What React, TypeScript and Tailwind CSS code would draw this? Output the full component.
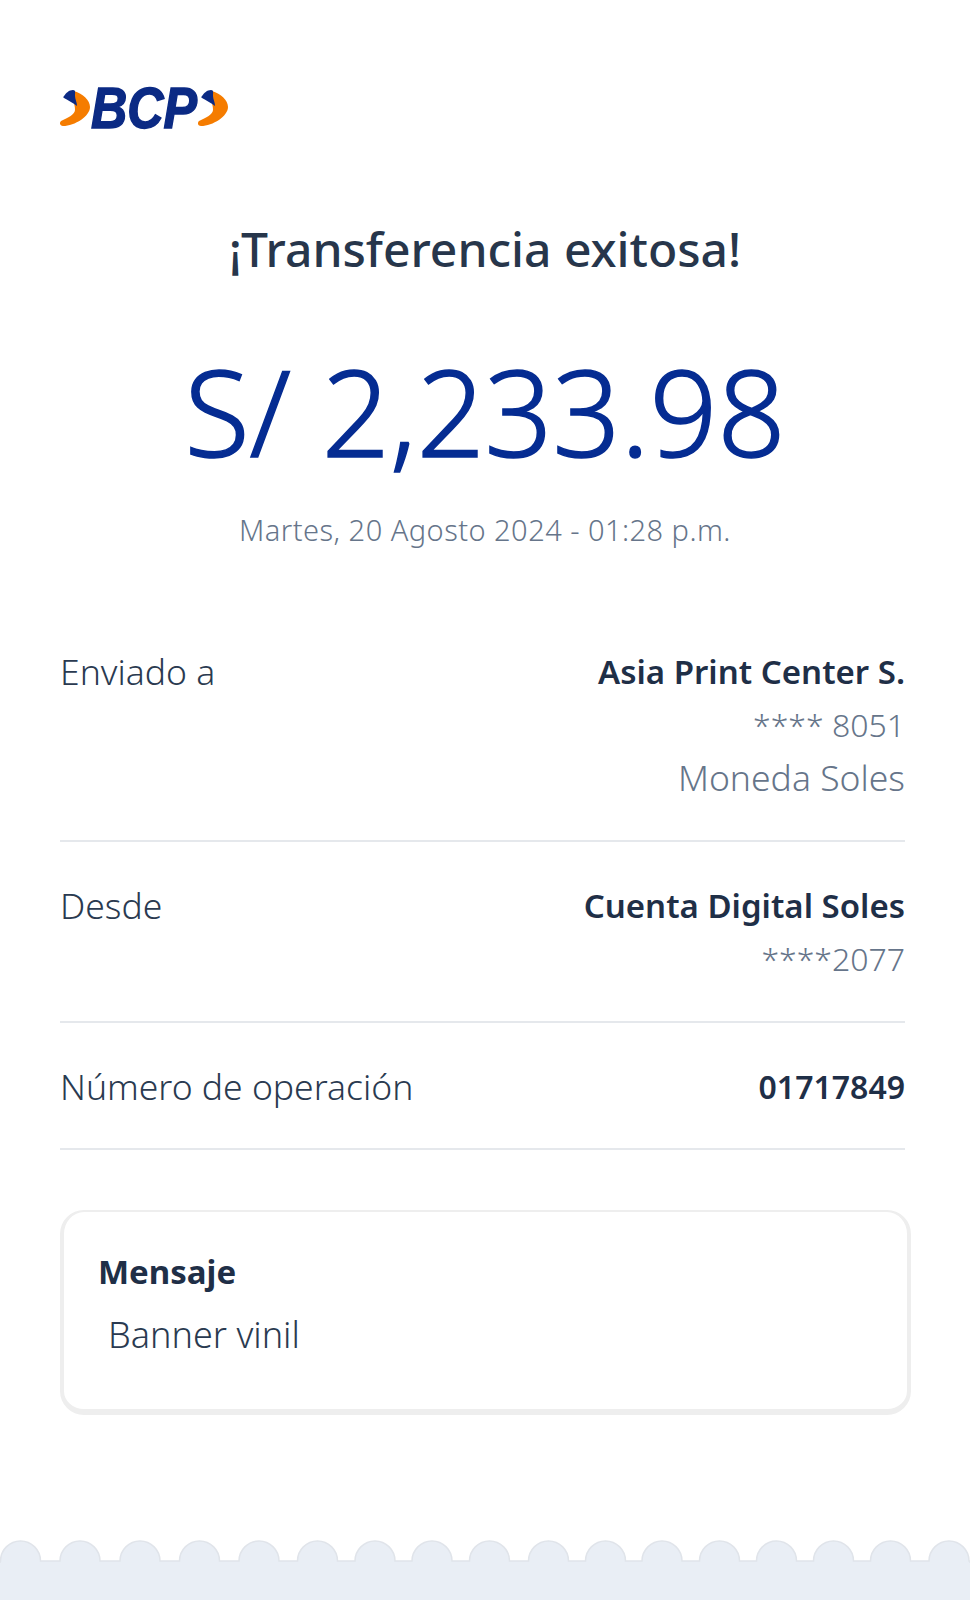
const scallops = [20.5, 80, 140, 199.5, 259, 317.5, 375, 432, 489.5, 548.5, 605.5, 662, 719.5, 776.5, 833.5, 890.5, 949];

function Chevron({ x }: { x: number }) {
  return (
    <g transform={`translate(${x} 0)`}>
      <path d="M14 6 C23 9 30 15 30 22 C30 31 15 41 3 41 C0 41 -1 38 1 36 C8 33 15 29 15 25 C15 21 14 18 13 15 Z" fill="#f57c00" />
      <path d="M4 11 C6 8 9 5 13 5 C16 5 15 8 15 11 C15 14 17 17 17 21 C13 18 8 15 4 13 C3 12.500 3 12 4 11 Z" fill="#0b2a84" />
    </g>
  );
}

function BcpLogo() {
  return (
    <svg width="172" height="70" viewBox="0 -10 172 70" className="block">
      <Chevron x={0} />
      <text x="31" y="43" fontFamily="'Liberation Sans', sans-serif" fontWeight="700" fontStyle="italic" fontSize="57" fill="#0b2a84" stroke="#0b2a84" strokeWidth="1.5" textLength="106" lengthAdjust="spacingAndGlyphs">BCP</text>
      <Chevron x={138} />
    </svg>
  );
}

function ScallopEdge() {
  const base = 21;
  return (
    <svg width="970" height="60" viewBox="0 0 970 60" className="block">
      <path
        d={`M0 ${base} ` + scallops.map((c) => `L${c - 20} ${base} A20 20 0 0 1 ${c + 20} ${base}`).join(" ") + ` L970 ${base} L970 60 L0 60 Z`}
        fill="#e9eef5"
        stroke="#e0e4ea"
        strokeWidth="1.5"
      />
      <rect x="0" y="23" width="970" height="37" fill="#e9eef5" />
    </svg>
  );
}

function Row({ label, children, className }: { label: string; children: React.ReactNode; className: string }) {
  return (
    <div className={`flex justify-between border-b-2 border-[#e5e8ec] ${className}`}>
      <span className="text-[35.500px] font-light leading-[53px] text-[#2a3a50]">{label}</span>
      <div className="text-right leading-[53px]">{children}</div>
    </div>
  );
}

export default function App() {
  return (
    <div className="flex h-[1600px] w-[970px] flex-col overflow-hidden bg-white font-['Noto_Sans',sans-serif]">
      <div className="px-[60px] pt-[75px]">
        <BcpLogo />
      </div>
      <h1 className="mt-[74px] text-center text-[48px] font-medium leading-[60px] text-[#27364b]">¡Transferencia exitosa!</h1>
      <div className="mt-[67px] text-center text-[119px] font-light leading-[130px] text-[#052c92] [-webkit-text-stroke:1.5px_#052c92]">S/ 2,233.98</div>
      <div className="mt-[34px] text-center text-[29px] font-light leading-[40px] tracking-[0.46px] text-[#66758a]">Martes, 20 Agosto 2024 - 01:28 p.m.</div>

      <div className="mb-[60px] mr-[65px] ml-[60px] mt-[95px]">
        <Row label="Enviado a" className="pb-[36px]">
          <div className="text-[33px] font-semibold text-[#1f2f47]">Asia Print Center S.</div>
          <div className="text-[32px] font-light text-[#66758a]">**** 8051</div>
          <div className="text-[35.500px] font-light text-[#66758a]">Moneda Soles</div>
        </Row>
        <Row label="Desde" className="pb-[36px] pt-[37px]">
          <div className="text-[33px] font-semibold text-[#1f2f47]">Cuenta Digital Soles</div>
          <div className="text-[32px] font-light text-[#66758a]">****2077</div>
        </Row>
        <Row label="Número de operación" className="pb-[35px] pt-[37px]">
          <div className="text-[32px] font-semibold text-[#1f2f47]">01717849</div>
        </Row>
      </div>

      <div className="ml-[60px] h-[205px] w-[851px] rounded-[24px] border-x-[4px] border-b-[6px] border-t-[2px] border-[#eeeeee] px-[34px] pt-[35px]">
        <div className="text-[33px] font-bold leading-[50px] text-[#1f2f47]">Mensaje</div>
        <div className="mt-[13px] pl-[10px] text-[36px] font-light leading-[50px] text-[#2a3a50]">Banner vinil</div>
      </div>

      <div className="mt-auto">
        <ScallopEdge />
      </div>
    </div>
  );
}
